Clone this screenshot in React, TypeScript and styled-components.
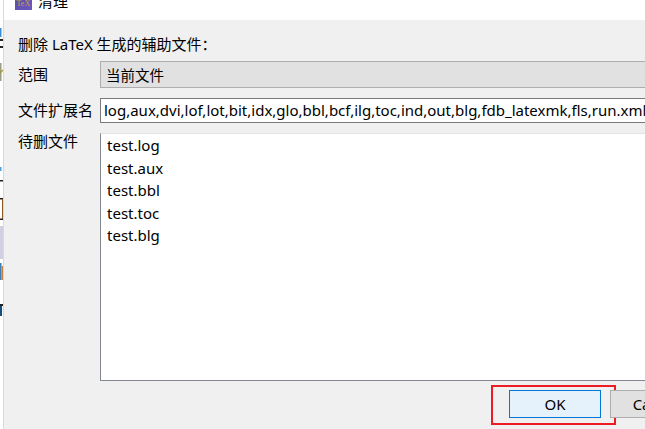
import React from "react";
import styled, { createGlobalStyle } from "styled-components";

const GlobalStyle = createGlobalStyle`
  html, body {
    margin: 0;
    padding: 0;
    background: #fff;
  }
`;

const FONT = `"Noto Sans", "Noto Sans CJK SC", sans-serif`;

const Page = styled.div`
  display: flex;
  width: 645px;
  height: 429px;
  overflow: hidden;
  font-family: ${FONT};
  font-size: 15px;
  color: #000;
`;

const BehindWindow = styled.svg`
  flex: none;
  width: 3px;
  height: 429px;
  background: #fff;
`;

const Dialog = styled.div`
  flex: none;
  width: 642px;
  display: flex;
  flex-direction: column;
  border-left: 1px solid #d9d9d9;
  box-sizing: border-box;
`;

const TitleBar = styled.div`
  flex: none;
  height: 20px;
  background: #fff;
  display: flex;
  align-items: flex-end;
  gap: 6px;
  padding-left: 11px;
  overflow: hidden;
`;

const TitleIcon = styled.svg`
  flex: none;
  width: 17px;
  height: 17px;
  margin-bottom: 10px;
`;

const IconLabel = styled.text`
  font-family: "Liberation Serif", serif;
  font-size: 8px;
  fill: #c9a24a;
`;

const TitleText = styled.span`
  font-size: 15px;
  line-height: 20px;
  margin-bottom: 9px;
`;

const Body = styled.div`
  flex: 1;
  background: #f0f0f0;
  display: flex;
  flex-direction: column;
  padding: 14px 0 0 14px;
`;

const Heading = styled.div`
  height: 27px;
  line-height: 21px;
`;

const Form = styled.div`
  display: grid;
  grid-template-columns: 82px 560px;
  grid-template-rows: 27px 25px 248px;
  row-gap: 10px;
`;

const Label = styled.div<{ $top?: boolean }>`
  display: flex;
  align-items: ${(p) => (p.$top ? "flex-start" : "center")};
  line-height: 18px;
  margin-top: -1px;
`;

const Combo = styled.div`
  box-sizing: border-box;
  background: #e1e1e1;
  border: 1px solid #adadad;
  border-right: none;
  padding-left: 5px;
  display: flex;
  align-items: center;
  font-size: 14.5px;
`;

const Extensions = styled.div`
  box-sizing: border-box;
  background: #fff;
  border: solid #7a7a7a;
  border-width: 1.5px 0 1.5px 1.5px;
  padding: 0 0 1px 3px;
  display: flex;
  align-items: center;
  white-space: nowrap;
  overflow: hidden;
`;

const FileList = styled.div`
  box-sizing: border-box;
  background: #fff;
  border-left: 1px solid #828790;
  border-bottom: 1px solid #828790;
  border-top: 1px solid #e3e3e3;
  padding-left: 6px;
`;

const FileRow = styled.div`
  height: 22.5px;
  line-height: 22.5px;
`;

const Footer = styled.div`
  display: flex;
  gap: 9px;
  margin: 9px 0 0 491px;
`;

const Button = styled.div<{ $primary?: boolean }>`
  position: relative;
  flex: none;
  box-sizing: border-box;
  width: 92px;
  height: 28px;
  display: flex;
  align-items: center;
  justify-content: center;
  background: ${(p) => (p.$primary ? "#e5f1fb" : "#e1e1e1")};
  border: 1px solid ${(p) => (p.$primary ? "#0078d7" : "#adadad")};
`;

const RedMark = styled.div`
  position: absolute;
  left: -19px;
  top: -6px;
  width: 125px;
  height: 40px;
  box-sizing: border-box;
  border: 2px solid #ed1c24;
  pointer-events: none;
`;

const files = ["test.log", "test.aux", "test.bbl", "test.toc", "test.blg"];

export default function App() {
  return (
    <Page>
      <GlobalStyle />
      {/* bits of the window behind */}
      <BehindWindow viewBox="0 0 3 429">
        <rect x="0" y="28" width="1.5" height="9" fill="#3f8fd8" />
        <rect x="0" y="39" width="3" height="2" fill="#222" />
        <rect x="0" y="46" width="3" height="2" fill="#222" />
        <rect x="0" y="63" width="1.5" height="18" fill="#9a9c84" />
        <path d="M0 73 L3 70" stroke="#a89a30" strokeWidth="1.5" />
        <rect x="0" y="167" width="1.5" height="4" fill="#4aa0e0" />
        <rect x="0" y="180" width="3" height="1.5" fill="#222" />
        <rect x="0" y="198" width="3" height="1.5" fill="#222" />
        <rect x="0" y="218.5" width="3" height="1.5" fill="#222" />
        <rect x="2" y="199" width="1" height="20" fill="#8a5a20" />
        <rect x="0" y="226" width="3" height="33" fill="#d0d0e2" />
        <rect x="0" y="263" width="1.5" height="17" fill="#3f7cb8" />
        <rect x="1.5" y="266" width="1.5" height="14" fill="#c8803a" />
        <rect x="0" y="304" width="3" height="2" fill="#222" />
        <rect x="0" y="306" width="2" height="10" fill="#14507e" />
      </BehindWindow>
      <Dialog>
        <TitleBar>
          <TitleIcon viewBox="0 0 17 17">
            <defs>
              <linearGradient id="tex-bg" x1="0" y1="0" x2="1" y2="1">
                <stop offset="0" stopColor="#5a4aa8" />
                <stop offset="1" stopColor="#6a5ac0" />
              </linearGradient>
            </defs>
            <rect width="17" height="17" fill="url(#tex-bg)" />
            <IconLabel x="1.5" y="13">TeX</IconLabel>
          </TitleIcon>
          <TitleText>清理</TitleText>
        </TitleBar>
        <Body>
          <Heading>删除 LaTeX 生成的辅助文件：</Heading>
          <Form>
            <Label>范围</Label>
            <Combo>当前文件</Combo>
            <Label>文件扩展名</Label>
            <Extensions>
              log,aux,dvi,lof,lot,bit,idx,glo,bbl,bcf,ilg,toc,ind,out,blg,fdb_latexmk,fls,run.xml
            </Extensions>
            <Label $top>待删文件</Label>
            <FileList>
              {files.map((f) => (
                <FileRow key={f}>{f}</FileRow>
              ))}
            </FileList>
          </Form>
          <Footer>
            <Button $primary>
              OK
              <RedMark />
            </Button>
            <Button>Cancel</Button>
          </Footer>
        </Body>
      </Dialog>
    </Page>
  );
}
